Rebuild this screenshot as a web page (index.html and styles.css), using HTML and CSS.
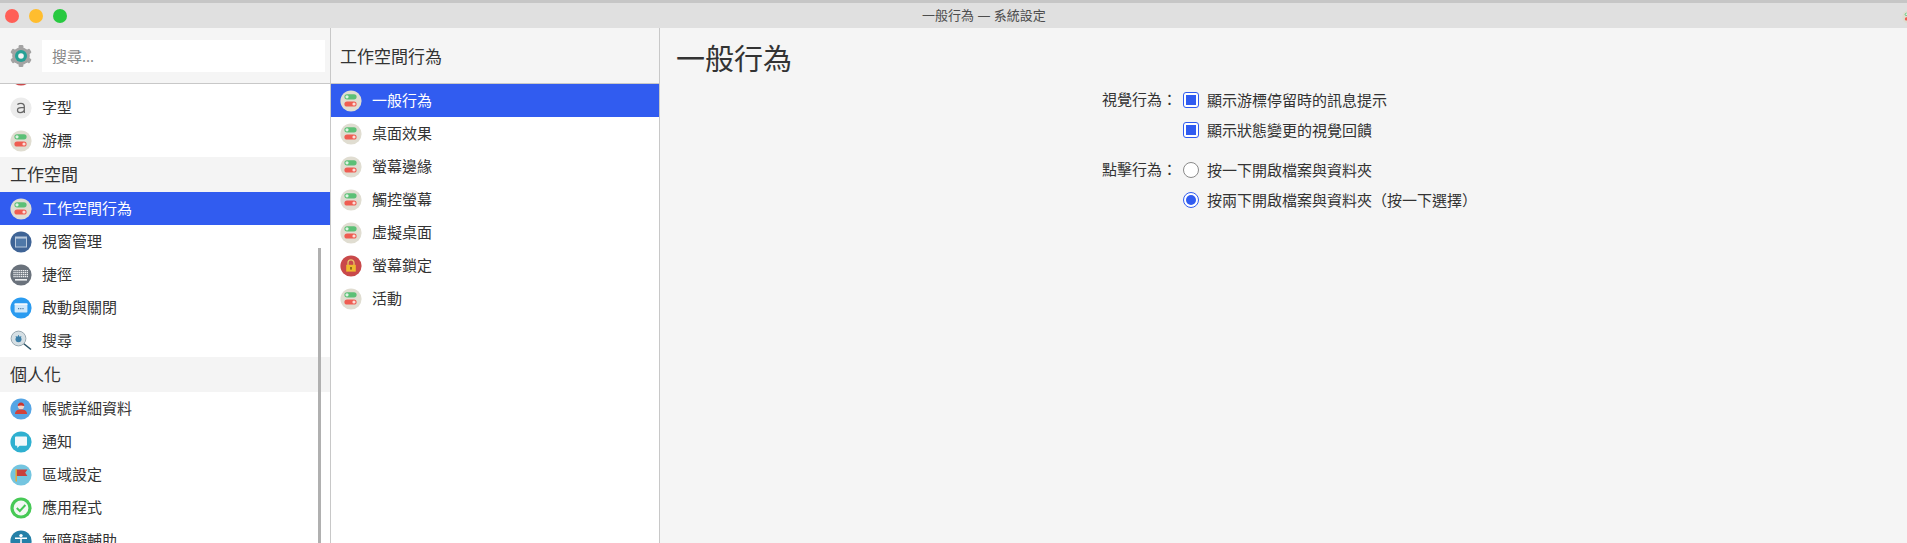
FILE: index.html
```html
<!DOCTYPE html>
<html lang="zh-Hant">
<head>
    <meta charset="utf-8">
    <title>一般行為 — 系統設定</title>
    <link rel="stylesheet" href="styles.css">
</head>
<body>
<svg class="defs" width="0" height="0">
    <symbol id="i-toggle" viewBox="0 0 22 22">
        <circle cx="11" cy="11" r="10.6" fill="#e0ddd1"/>
        <rect x="4.4" y="4.2" width="12.2" height="5.2" rx="2.6" fill="#5cc076"/>
        <circle cx="7" cy="6.800" r="1.600" fill="#dff3e3"/>
        <rect x="4.4" y="11.4" width="12.2" height="5.2" rx="2.6" fill="#ef5d52"/>
        <circle cx="14" cy="14" r="1.600" fill="#fbdcd8"/>
    </symbol>
    <symbol id="i-font" viewBox="0 0 22 22">
        <circle cx="11" cy="11" r="10.6" fill="#ececec"/>
        <path d="M7.4 7.600c1-.9 2.200-1.300 3.500-1.300 2.200 0 3.400 1.100 3.400 3.200v6.500M14.300 10.600h-3.200c-2.300 0-3.600 1-3.600 2.600 0 1.500 1 2.400 2.600 2.400 1.900 0 3.400-1 4.200-2.400" fill="none" stroke="#666" stroke-width="1.300"/>
    </symbol>
    <symbol id="i-window" viewBox="0 0 22 22">
        <circle cx="11" cy="11" r="10.6" fill="#3f6496"/>
        <rect x="5.500" y="6" width="11" height="10" fill="#4f78a8" stroke="#b9c9dc"/>
        <rect x="5.500" y="6" width="11" height="1.600" fill="#b9c9dc"/>
    </symbol>
    <symbol id="i-keys" viewBox="0 0 22 22">
        <circle cx="11" cy="11" r="10.6" fill="#6a727c"/>
        <path d="M3.400 6.600h15.200M3.400 8.600h15.200M3.400 10.600h15.200M3.400 12.600h15.200" stroke="#eceef0" stroke-width="1.300" stroke-dasharray="1.300 .6"/>
        <rect x="5" y="15" width="12" height="1.600" fill="#eceef0"/>
    </symbol>
    <symbol id="i-start" viewBox="0 0 22 22">
        <circle cx="11" cy="11" r="10.6" fill="#2a9bf0"/>
        <rect x="4.600" y="6.400" width="12.800" height="9.200" rx="1" fill="#cfe8fb"/>
        <rect x="4.600" y="6.400" width="12.800" height="1.600" fill="#f1f8fe"/>
        <path d="M8 11.600h6" stroke="#4a7da6" stroke-width="1.200" stroke-dasharray="1.200 1"/>
    </symbol>
    <symbol id="i-search" viewBox="0 0 22 22">
        <path d="M13.500 13.500l7.500 6" stroke="#2c5468" stroke-width="1.600"/>
        <circle cx="8.500" cy="8.500" r="7.400" fill="#d5dfe4" stroke="#9aa9b1" stroke-width="1"/>
        <circle cx="8.500" cy="9.200" r="3" fill="#3a7ea8"/>
        <path d="M6 6.200l1 1.600M8.500 5.200v2M11 6.200l-1 1.600" stroke="#3a7ea8" stroke-width="1"/>
    </symbol>
    <symbol id="i-user" viewBox="0 0 22 22">
        <circle cx="11" cy="11" r="10.6" fill="#55a5e5"/>
        <circle cx="11" cy="8.200" r="3.100" fill="#f3d5c8"/>
        <path d="M7.700 8c0-2.200 1.400-3.400 3.300-3.400s3.300 1.200 3.300 3.400c-2-.8-4.600-.8-6.600 0z" fill="#c8352f"/>
        <path d="M5 16c0-3 2.400-4.400 6-4.400s6 1.400 6 4.400z" fill="#d2423a"/>
    </symbol>
    <symbol id="i-bubble" viewBox="0 0 22 22">
        <circle cx="11" cy="11" r="10.6" fill="#2fb0d0"/>
        <path d="M6 5.600h10a1 1 0 0 1 1 1v7.200a1 1 0 0 1-1 1h-6.400L7.200 17v-2.200H6a1 1 0 0 1-1-1V6.600a1 1 0 0 1 1-1z" fill="#f2f8fa"/>
    </symbol>
    <symbol id="i-flag" viewBox="0 0 22 22">
        <circle cx="11" cy="11" r="10.6" fill="#74c5e0"/>
        <rect x="5.500" y="5" width="1.400" height="12.500" fill="#f0a92b"/>
        <path d="M6.900 5.500h10.500l-2.200 3.200 2.200 3.300H6.900z" fill="#c8403c"/>
    </symbol>
    <symbol id="i-check" viewBox="0 0 22 22">
        <circle cx="11" cy="11" r="10.600" fill="#47c956"/>
        <circle cx="11" cy="11" r="7.400" fill="#f4f8f4"/>
        <path d="M6.800 11l3 3 5.600-6" fill="none" stroke="#47c956" stroke-width="2"/>
    </symbol>
    <symbol id="i-access" viewBox="0 0 22 22">
        <circle cx="11" cy="11" r="10.600" fill="#2480a8"/>
        <circle cx="11" cy="5.600" r="1.700" fill="#fff"/>
        <path d="M5 8.200h12M11 8.200v4.500M11 12.700l-2.500 5M11 12.700l2.500 5" fill="none" stroke="#fff" stroke-width="1.500"/>
    </symbol>
    <symbol id="i-lock" viewBox="0 0 22 22">
        <circle cx="11" cy="11" r="10.600" fill="#c9494a"/>
        <path d="M8 10V7.800a3 3 0 0 1 6 0V10" fill="none" stroke="#e9c46a" stroke-width="1.300"/>
        <rect x="6.200" y="9.800" width="9.600" height="6.800" fill="#eeb92f"/>
        <rect x="10.300" y="12" width="1.400" height="2.600" fill="#6d4c12"/>
    </symbol>
    <symbol id="i-gear" viewBox="0 0 22 22">
        <g fill="#a3a3a3">
            <circle cx="11" cy="11" r="8.800"/>
            <rect x="8.600" y="0" width="4.800" height="22" rx="1.200"/>
            <rect x="8.600" y="0" width="4.800" height="22" rx="1.200" transform="rotate(60 11 11)"/>
            <rect x="8.600" y="0" width="4.800" height="22" rx="1.200" transform="rotate(120 11 11)"/>
        </g>
        <circle cx="11" cy="11" r="6" fill="#25a195"/>
        <circle cx="11" cy="11" r="2.800" fill="#f5f5f5"/>
    </symbol>
</svg>

<div class="titlebar">
    <div class="lights">
        <i class="light red"></i>
        <i class="light yellow"></i>
        <i class="light green"></i>
    </div>
    <div class="title">一般行為 — 系統設定</div>
    <svg class="app-icon"><use href="#i-toggle"/></svg>
</div>

<div class="panels">
    <div class="sidebar">
        <div class="head search-head">
            <svg class="icon"><use href="#i-gear"/></svg>
            <input class="search" type="text" placeholder="搜尋...">
        </div>
        <div class="scroller">
            <ul class="list scrolled">
                <li><svg class="icon"><use href="#i-lock"/></svg>圖示</li>
                <li><svg class="icon"><use href="#i-font"/></svg>字型</li>
                <li><svg class="icon"><use href="#i-toggle"/></svg>游標</li>
                <li class="section">工作空間</li>
                <li class="active"><svg class="icon"><use href="#i-toggle"/></svg>工作空間行為</li>
                <li><svg class="icon"><use href="#i-window"/></svg>視窗管理</li>
                <li><svg class="icon"><use href="#i-keys"/></svg>捷徑</li>
                <li><svg class="icon"><use href="#i-start"/></svg>啟動與關閉</li>
                <li><svg class="icon"><use href="#i-search"/></svg>搜尋</li>
                <li class="section">個人化</li>
                <li><svg class="icon"><use href="#i-user"/></svg>帳號詳細資料</li>
                <li><svg class="icon"><use href="#i-bubble"/></svg>通知</li>
                <li><svg class="icon"><use href="#i-flag"/></svg>區域設定</li>
                <li><svg class="icon"><use href="#i-check"/></svg>應用程式</li>
                <li><svg class="icon"><use href="#i-access"/></svg>無障礙輔助</li>
            </ul>
            <div class="scrollbar"></div>
        </div>
    </div>

    <div class="middle">
        <div class="head mid-head">工作空間行為</div>
        <ul class="list">
            <li class="active"><svg class="icon"><use href="#i-toggle"/></svg>一般行為</li>
            <li><svg class="icon"><use href="#i-toggle"/></svg>桌面效果</li>
            <li><svg class="icon"><use href="#i-toggle"/></svg>螢幕邊緣</li>
            <li><svg class="icon"><use href="#i-toggle"/></svg>觸控螢幕</li>
            <li><svg class="icon"><use href="#i-toggle"/></svg>虛擬桌面</li>
            <li><svg class="icon"><use href="#i-lock"/></svg>螢幕鎖定</li>
            <li><svg class="icon"><use href="#i-toggle"/></svg>活動</li>
        </ul>
    </div>

    <div class="content">
        <h1>一般行為</h1>
        <div class="form">
            <div class="group">
                <div class="label">視覺行為：</div>
                <div class="options">
                    <label><input type="checkbox" checked>顯示游標停留時的訊息提示</label>
                    <label><input type="checkbox" checked>顯示狀態變更的視覺回饋</label>
                </div>
            </div>
            <div class="group">
                <div class="label">點擊行為：</div>
                <div class="options">
                    <label><input type="radio" name="click">按一下開啟檔案與資料夾</label>
                    <label><input type="radio" name="click" checked>按兩下開啟檔案與資料夾（按一下選擇）</label>
                </div>
            </div>
        </div>
    </div>
</div>
</body>
</html>
```

FILE: styles.css
```css
* {
    box-sizing: border-box;
}

html, body {
    margin: 0;
    height: 543px;
    overflow: hidden;
}

body {
    display: flex;
    flex-direction: column;
    background: #f5f5f5;
    color: #333;
    font-family: "Noto Sans", "Noto Sans CJK TC", sans-serif;
    font-size: 15px;
}

.defs {
    display: none;
}

.titlebar {
    position: relative;
    display: flex;
    align-items: center;
    flex: none;
    height: 28px;
    padding: 1px 6px 0 5px;
    background: #e0e0e0;
    border-top: 3px solid #c6c6c6;
}

.lights {
    display: flex;
    gap: 10px;
}

.light {
    width: 14px;
    height: 14px;
    border-radius: 50%;
}

.red { background: #ff5f57; }
.yellow { background: #ffbd2e; }
.green { background: #28c940; }

.title {
    flex: 1;
    padding-bottom: 3px;
    text-align: center;
    font-size: 13px;
    color: #4d4d4d;
}

.app-icon {
    position: absolute;
    left: 1902px;
    top: 7px;
    width: 14px;
    height: 14px;
}

.panels {
    display: flex;
    flex: 1;
    min-height: 0;
}

.sidebar {
    display: flex;
    flex-direction: column;
    flex: none;
    width: 331px;
    border-right: 1px solid #c8c8c8;
}

.middle {
    display: flex;
    flex-direction: column;
    flex: none;
    width: 329px;
    border-right: 1px solid #c8c8c8;
}

.head {
    display: flex;
    align-items: center;
    flex: none;
    height: 56px;
    border-bottom: 1px solid #c8c8c8;
    background: #f5f5f5;
}

.search-head {
    padding: 0 5px 0 10px;
}

.search {
    flex: 1;
    min-width: 0;
    height: 32px;
    margin-left: 10px;
    padding: 0 10px;
    border: 0;
    background: #fff;
    font: inherit;
    font-size: 15px;
}

.search::placeholder {
    color: #888;
}

.mid-head {
    padding-left: 9px;
    font-size: 17px;
}

.scroller {
    position: relative;
    flex: 1;
    min-height: 0;
    overflow: hidden;
    background: #fff;
}

.scrollbar {
    position: absolute;
    left: 318px;
    top: 164px;
    bottom: 0;
    width: 3px;
    background: #b0b0b0;
}

ul.list {
    margin: 0;
    padding: 0;
    list-style: none;
    background: #fff;
}

.middle .list {
    flex: 1;
}

.scrolled {
    margin-top: -26px !important;
}

.list li {
    display: flex;
    align-items: center;
    height: 33px;
    padding: 0 0 2px 10px;
}

.middle .list li {
    padding-left: 9px;
}

.list .active {
    background: #315cf0;
    color: #fff;
}

.list .section {
    height: 35px;
    padding-left: 10px;
    background: #f4f4f4;
    font-size: 17px;
}

.icon {
    flex: none;
    width: 22px;
    height: 22px;
    margin: 0 10px -2px 0;
}

.search-head .icon {
    margin: 0;
}

.content {
    flex: 1;
    min-width: 0;
}

h1 {
    display: flex;
    align-items: center;
    height: 56px;
    margin: 0;
    padding: 2px 0 0 16px;
    font-size: 29px;
    font-weight: normal;
}

.form {
    display: flex;
    flex-direction: column;
    gap: 10px;
    padding: 1px 0 0 442px;
}

.group {
    display: flex;
}

.label {
    width: 81px;
    height: 30px;
    line-height: 28px;
}

.options {
    display: flex;
    flex-direction: column;
}

.options label {
    display: flex;
    align-items: center;
    height: 30px;
    padding-bottom: 2px;
}

.options input {
    appearance: none;
    display: flex;
    align-items: center;
    justify-content: center;
    flex: none;
    width: 16px;
    height: 16px;
    margin: 0 8px -2px 0;
    border: 1px solid #8a8a8a;
    background: #fff;
}

.options input[type=checkbox] {
    border-radius: 3px;
}

.options input[type=radio] {
    border-radius: 50%;
}

.options input:checked {
    border-color: #315cf0;
}

.options input:checked::before {
    content: "";
    width: 10px;
    height: 10px;
    background: #315cf0;
}

.options input[type=radio]:checked::before {
    border-radius: 50%;
}
```
